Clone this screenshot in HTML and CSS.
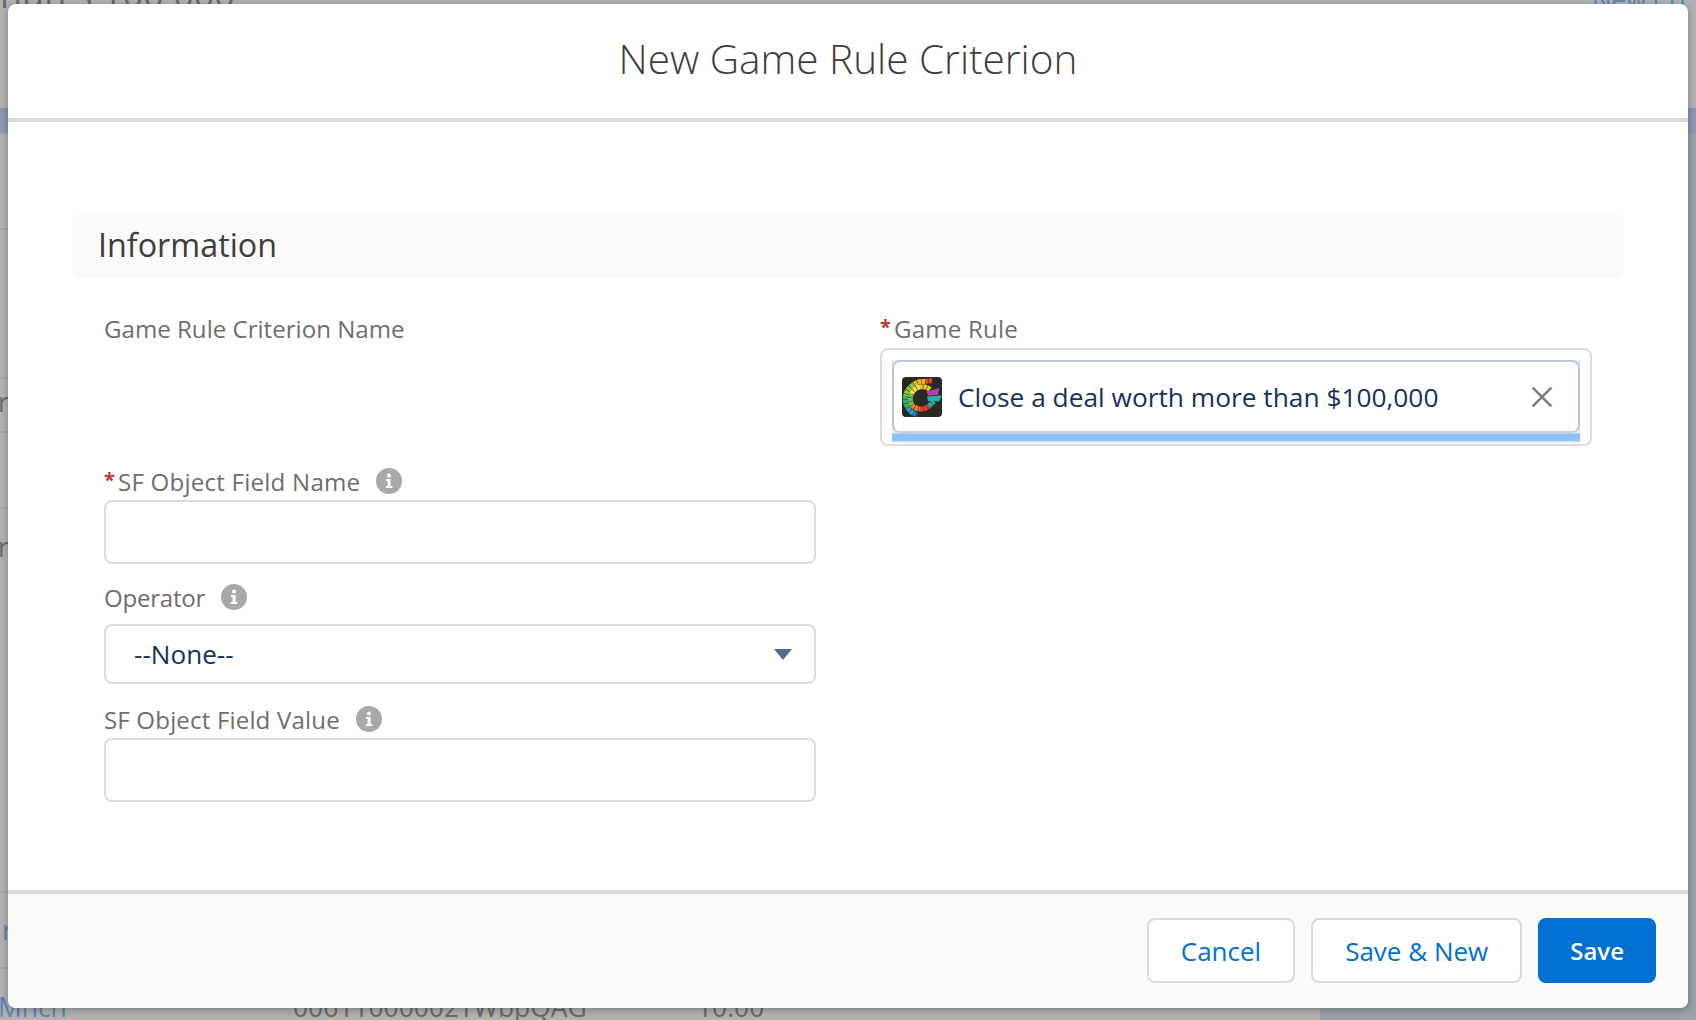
FILE: index.html
```html
<!DOCTYPE html>
<html lang="en">
<head>
    <meta charset="UTF-8">
    <meta name="viewport" content="width=device-width, initial-scale=1.0">
    <title>New Game Rule Criterion</title>
    <link rel="stylesheet" href="styles.css">
</head>
<body>
    <!-- page behind the modal -->
    <div class="backdrop">
        <div class="page-head">
            <span class="page-title">nun s 100,000</span>
            <span class="page-action">New Co</span>
        </div>
        <div class="band"></div>
        <div class="table">
            <div class="row row-a"></div>
            <div class="row row-b"></div>
            <div class="row row-c"><span class="cell-edge">r</span></div>
            <div class="row row-d"></div>
            <div class="row row-e"><span class="cell-edge">r</span></div>
            <div class="row row-f"><span class="cell-link">r</span></div>
            <div class="row row-last">
                <span class="cell-link">Mnch</span>
                <span class="cell-id">00611000002TWbpQAG</span>
                <span class="cell-num">10.00</span>
                <span class="cell-arrow"></span>
            </div>
        </div>
    </div>

    <svg class="sprites" width="0" height="0">
        <symbol id="info" viewBox="0 0 26 26">
            <circle cx="13" cy="13" r="13" fill="#a9a9a8"/>
            <circle cx="13" cy="7.6" r="2" fill="#fff"/>
            <path d="M10 11h4.6v7H16.400v2H9.800v-2h1.800v-5H10z" fill="#fff"/>
        </symbol>
    </svg>

    <div class="modal">
        <div class="modal-header">
            <h2>New Game Rule Criterion</h2>
        </div>

        <div class="modal-body">
            <h3 class="section-title">Information</h3>

            <div class="form">
                <div class="field field-name">
                    <label>Game Rule Criterion Name</label>
                </div>

                <div class="field field-rule">
                    <label><span class="req">*</span>Game Rule</label>
                    <div class="lookup">
                        <div class="lookup-focus">
                            <div class="lookup-pill">
                                <svg class="rule-logo" viewBox="0 0 40 40">
                                    <rect width="40" height="40" rx="4" fill="#2a2a25"/>
                                    <g fill="none" stroke-width="5" stroke-dasharray="3.400 .5">
                                        <path d="M30 4A17 17 0 0 0 23 4.500" stroke="#e8452f"/>
                                        <path d="M23 4.500A17 17 0 0 0 11 8" stroke="#f5b324"/>
                                        <path d="M11 8A17 17 0 0 0 3.500 19" stroke="#8cc63f"/>
                                        <path d="M3.500 19A17 17 0 0 0 6 31" stroke="#2fb36b"/>
                                        <path d="M6 31A17 17 0 0 0 11 36" stroke="#1fa7c4"/>
                                        <path d="M11 36A17 17 0 0 0 15 38" stroke="#2176d2"/>
                                        <path d="M28 12.500A11 11 0 0 0 18 10" stroke="#e9c81f"/>
                                        <path d="M18 10A11 11 0 0 0 9.500 17" stroke="#f3e24a"/>
                                        <path d="M9.500 17A11 11 0 0 0 10 28" stroke="#6cbf45"/>
                                        <path d="M10 28A11 11 0 0 0 18 32" stroke="#f0792b"/>
                                        <path d="M18 32A11 11 0 0 0 27 29" stroke="#e63b2e"/>
                                        <path d="M27 29L32 24.500" stroke="#1fb0a6"/>
                                    </g>
                                    <path d="M25 19.500L40 18.500L37 24.500L26 24z" fill="#22b5ad"/>
                                    <path d="M24.500 14.500L37.500 11L36 18L26 18.800z" fill="#b63fb0"/>
                                </svg>
                                <span class="lookup-text">Close a deal worth more than $100,000</span>
                                <svg class="lookup-clear" viewBox="0 0 20 20">
                                    <path d="M1.500 1.500L18.500 18.500M18.500 1.500L1.500 18.500" stroke="#7f7f7f" stroke-width="2.400" fill="none"/>
                                </svg>
                            </div>
                            <div class="lookup-bar"></div>
                        </div>
                    </div>
                </div>

                <div class="field field-api">
                    <label><span class="req">*</span>SF Object Field Name<svg class="info"><use href="#info"/></svg></label>
                    <input type="text">
                </div>

                <div class="field field-op">
                    <label>Operator<svg class="info"><use href="#info"/></svg></label>
                    <div class="select-wrap">
                        <select>
                            <option>--None--</option>
                        </select>
                    </div>
                </div>

                <div class="field field-value">
                    <label>SF Object Field Value<svg class="info"><use href="#info"/></svg></label>
                    <input type="text">
                </div>
            </div>
        </div>

        <div class="modal-footer">
            <button class="btn">Cancel</button>
            <button class="btn">Save &amp; New</button>
            <button class="btn btn-brand">Save</button>
        </div>
    </div>
</body>
</html>
```

FILE: styles.css
```css
* {
    box-sizing: border-box;
}

html, body {
    height: 100%;
}

body {
    margin: 0;
    overflow: hidden;
    font-family: "Open Sans", "Noto Sans", Arial, sans-serif;
    background-color: #9aa1ab;
    padding: 4px 8px 12px;
}

/* page behind the modal */
.backdrop {
    position: absolute;
    inset: 0;
    overflow: hidden;
    display: flex;
    flex-direction: column;
}

.page-head {
    height: 108px;
    flex: none;
    background-color: #b3b3b3;
    position: relative;
    overflow: hidden;
}

.page-title {
    position: absolute;
    left: 0;
    top: -30px;
    font-size: 36px;
    color: #6a6a6a;
    white-space: nowrap;
}

.page-action {
    position: absolute;
    left: 1592px;
    top: -19px;
    font-size: 26px;
    color: #6085b4;
}

.band {
    height: 25px;
    flex: none;
    background-color: #8b9ab0;
}

.table {
    width: 1320px;
    flex: 1;
    background-color: #b3b3b3;
    display: flex;
    flex-direction: column;
}

.row {
    border-top: 2px solid #a8a8a8;
    position: relative;
    flex: none;
}

.row-a { height: 95px; }
.row-b { height: 149px; }
.row-c { height: 54px; }
.row-d { height: 76px; }
.row-e { height: 384px; }
.row-f { height: 76px; }
.row-last { height: 54px; }

.cell-edge, .cell-link, .cell-id, .cell-num {
    position: absolute;
    font-size: 26.400px;
    white-space: nowrap;
}

.cell-edge {
    left: -2px;
    top: 5px;
    color: #6a6a6a;
}

.row-e .cell-edge {
    top: 20px;
}

.cell-link {
    left: 2px;
    color: #6085b4;
}

.row-f .cell-link {
    top: 19px;
}

.row-last .cell-link, .cell-id, .cell-num {
    top: 20px;
}

.row-last .cell-link {
    left: -2px;
}

.cell-id {
    left: 293px;
    color: #6a6a6a;
}

.cell-num {
    left: 697px;
    color: #6a6a6a;
}

.cell-arrow {
    position: absolute;
    left: 1113px;
    top: 28px;
    border-left: 7px solid transparent;
    border-right: 7px solid transparent;
    border-top: 8px solid #6a6a6a;
}

.sprites {
    position: absolute;
}

/* modal */
.modal {
    position: relative;
    height: 1004px;
    background-color: white;
    border-radius: 8px;
    box-shadow: 0 2px 8px rgba(0, 0, 0, 0.3);
    display: flex;
    flex-direction: column;
    overflow: hidden;
}

.modal-header {
    height: 118px;
    flex: none;
    border-bottom: 4px solid #dddbda;
    padding-top: 30px;
    text-align: center;
}

.modal-header h2 {
    margin: 0;
    font-size: 40.500px;
    line-height: 50px;
    font-weight: 300;
    color: #3e3e3c;
}

.modal-body {
    flex: 1;
    padding: 92px 64px 0;
}

.section-title {
    margin: 0;
    height: 64px;
    padding-left: 26px;
    background-color: #fafaf9;
    border-radius: 8px;
    font-size: 32.300px;
    line-height: 61px;
    font-weight: 400;
    color: #3e3e3c;
}

.form {
    padding: 38px 32px 0;
    display: grid;
    grid-template-columns: 712px 712px;
    column-gap: 64px;
}

.field label {
    display: flex;
    align-items: center;
    height: 26px;
    padding-bottom: 2px;
    font-size: 24.100px;
    color: #706e6b;
    white-space: nowrap;
}

.field-rule label {
    letter-spacing: 0.2px;
}

.field-api label {
    letter-spacing: 0.22px;
}

.field-op label {
    letter-spacing: -0.25px;
}

.field-value label {
    letter-spacing: 0.15px;
}

.req {
    width: 14px;
    flex: none;
    align-self: flex-start;
    font-size: 20px;
    font-weight: 700;
    line-height: 22px;
    letter-spacing: 0;
    color: #c23934;
}

.info {
    width: 26px;
    height: 26px;
    flex: none;
    margin-left: 16px;
}

.field-name {
    grid-column: 1;
    grid-row: 1;
}

.field-rule {
    grid-column: 2;
    grid-row: 1;
}

.field-api {
    grid-column: 1;
    margin-top: 23px;
}

.field-op {
    grid-column: 1;
    margin-top: 21px;
}

.field-value {
    grid-column: 1;
    margin-top: 23px;
}

.field input {
    display: block;
    width: 100%;
    height: 64px;
    margin-top: 5px;
    border: 2px solid #dddbda;
    border-radius: 8px;
    background-color: white;
}

.select-wrap {
    position: relative;
    margin-top: 13px;
}

.select-wrap::after {
    content: "";
    position: absolute;
    right: 24px;
    top: 25px;
    border-left: 9px solid transparent;
    border-right: 9px solid transparent;
    border-top: 11px solid #54698d;
}

.select-wrap select {
    display: block;
    width: 100%;
    height: 60px;
    padding: 0 28px;
    appearance: none;
    border: 2px solid #dddbda;
    border-radius: 8px;
    background-color: white;
    font-family: inherit;
    font-size: 26.100px;
    color: #16325c;
}

.lookup {
    margin-top: 6px;
    height: 98px;
    padding: 10px 10px 0;
    border: 2px solid #dddbda;
    border-radius: 8px;
}

.lookup-focus {
    height: 83px;
    background-color: #dcebfd;
}

.lookup-pill {
    height: 73px;
    padding: 0 25px 0 8px;
    display: flex;
    align-items: center;
    background-color: white;
    border: 2px solid #bcc8d6;
    border-bottom-color: #cfcfcf;
    border-radius: 8px;
}

.lookup-bar {
    height: 8px;
    background-color: #8fc1f9;
    border-top: 1px solid #b5d5fb;
}

.rule-logo {
    width: 40px;
    height: 40px;
    flex: none;
}

.lookup-text {
    margin-left: 16px;
    flex: 1;
    font-size: 26.300px;
    color: #16325c;
    white-space: nowrap;
}

.lookup-clear {
    width: 22px;
    height: 22px;
    flex: none;
}

.modal-footer {
    height: 118px;
    flex: none;
    border-top: 4px solid #dddbda;
    background-color: #fafaf9;
    padding: 24px 32px 0;
    display: flex;
    justify-content: flex-end;
    align-items: flex-start;
    gap: 16px;
}

.btn {
    height: 65px;
    padding: 0 32px;
    border: 2px solid #dddbda;
    border-radius: 8px;
    background-color: white;
    font-family: inherit;
    font-size: 26px;
    color: #0070d2;
}

.btn-brand {
    padding: 0 30px;
    background-color: #0070d2;
    border-color: #0070d2;
    color: white;
    font-size: 24px;
    font-weight: 600;
}
```
